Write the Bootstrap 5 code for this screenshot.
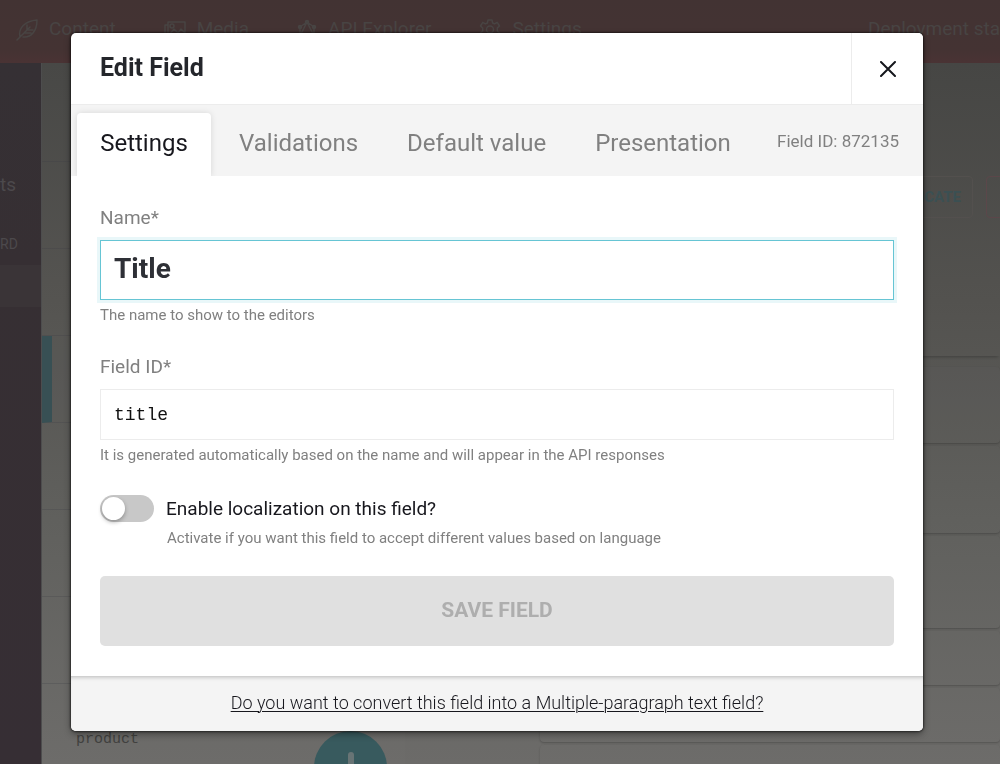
<!DOCTYPE html>
<html lang="en">
<head>
<meta charset="utf-8">
<meta name="viewport" content="width=device-width, initial-scale=1">
<title>Edit Field</title>
<link href="https://cdn.jsdelivr.net/npm/bootstrap@5.3.0/dist/css/bootstrap.min.css" rel="stylesheet">
<style>
  body { font-family: Roboto, "Liberation Sans", sans-serif; color: #17171d; overflow: hidden; }

  /* Dimmed application behind the dialog */
  .app { height: 100vh; overflow: hidden; background: linear-gradient(#464644 64px, #53524f 300px, #5f5f5c 520px, #6c6b69); }
  .app-nav { height: 63px; padding: 0 0 4px 16px; background: linear-gradient(#423333, #443333 50px, #4a3334); color: #484443; font-size: 19px; white-space: nowrap; }
  .app-nav a { color: inherit; gap: 11px; }
  .app-nav svg { fill: none; stroke: currentColor; stroke-width: 1.5; stroke-linejoin: round; stroke-linecap: round; }
  .side { width: 41px; flex: none; background: linear-gradient(#353034, #362f33 200px, #362e34); color: #4c494c; padding-top: 101px; }
  .side-item { height: 42px; line-height: 42px; font-size: 19px; }
  .side-heading { height: 42px; margin-top: 17px; line-height: 42px; font-size: 14px; }
  .side-active { height: 42px; background: #3a3437; }
  .models { width: 364px; flex: none; border-left: 1px solid #4d4d4e; background: rgba(255,255,255,.01); padding-top: 12px; }
  .model-row { height: 87px; border-bottom: 1px solid rgba(60,60,66,.25); padding-left: 34px; flex: none; }
  .model-current { border-left: 10px solid #385054; }
  .model-key { font: 15px/20px "Liberation Mono", monospace; color: #41413f; padding-top: 46px; }
  .add-model { width: 73px; height: 73px; right: 18px; bottom: -40px; border: 0; border-radius: 50%; background: #385a5e; padding: 20px 0 0; }
  .toolbar { padding-top: 113px; gap: 13px; margin-bottom: 62px; }
  .tool { height: 42px; border: 1px solid #53504e; border-radius: 4px; background: none; color: #3b5053; font-size: 15px; font-weight: 700; padding: 0 11px; flex: none; }
  .tool-danger { border-color: #5b474a; width: 48px; margin-right: -34px; }
  .entry { height: 54px; margin: 0 0 3px 135px; border-radius: 4px; background: rgba(255,255,255,.01); box-shadow: 0 1px 2px rgba(0,0,0,.22); flex: none; }
  .entry-tall { height: 92px; }
  .entry-mid { height: 87px; }
  .entry-first { height: 76px; margin-top: 11px; }
  .entries-head { height: 76px; box-shadow: 0 3px 3px -2px rgba(0,0,0,.25); flex: none; }

  /* Dialog */
  .modal { padding: 33px 6px 33px 0 !important; }
  .edit-dialog { max-width: 852px; margin: 0 auto; }
  .edit-dialog .modal-content { border: 0; border-radius: 5px; overflow: hidden; box-shadow: none; color: inherit; }
  .edit-frame { border-radius: 5px; box-shadow: 0 0 2px 1px rgba(0,0,0,.5), 0 3px 7px rgba(0,0,0,.4); }
  .edit-head { height: 72px; border-bottom: 1px solid #ececec; padding: 0 0 0 29px; }
  .edit-head h1 { font-size: 25px; line-height: 32px; font-weight: 700; color: #24262b; padding-bottom: 2px; }
  .close-btn { width: 72px; height: 71px; border: 0; border-left: 1px solid #ececec; background: #fff; }
  .tab-strip { background: #f4f4f4; padding: 7px 24px 0 6px; height: 71px; overflow: hidden; }
  .tab-strip .nav-link { border: 0; border-radius: 4px 4px 0 0; padding: 0 0 4px; height: 64px; font-size: 24px; color: #808080; margin-right: 49px; }
  .tab-strip .nav-link.active { width: 134px; margin-right: 28px; background: #fff; color: #17171d; box-shadow: 0 0 6px rgba(0,0,0,.12); }
  .field-ref { font-size: 17px; line-height: 24px; color: #808080; padding-bottom: 7px; white-space: nowrap; }
  .edit-body { padding: 28px 29px 30px; }
  .field-label { display: block; font-size: 19px; line-height: 28px; color: #808080; margin-bottom: 8px; }
  .field-box { border: 1px solid #ececec; border-radius: 0; padding: 0 13px; }
  .field-name { height: 60px; font-size: 28px; font-weight: 700; color: #2e3036; border-color: #66c5d4; box-shadow: 0 0 0 3px #e9f7f9; padding-bottom: 3px; }
  .field-name:focus { border-color: #66c5d4; box-shadow: 0 0 0 3px #e9f7f9; color: #2e3036; }
  .field-key { height: 51px; font: 18px "Liberation Mono", monospace; color: #111; }
  .hint { font-size: 15px; line-height: 20px; color: #808080; margin: 5px 0 0; }
  .field-group { margin-bottom: 28px; }
  .toggle { appearance: none; flex: none; width: 54px; height: 27px; margin: 0; padding: 2px; border-radius: 14px; background: #c8c8c8; }
  .toggle::before { content: ""; display: block; width: 23px; height: 23px; border-radius: 50%; background: #fff; box-shadow: 0 2px 4px rgba(0,0,0,.3); }
  .toggle:checked { background: #66c5d4; }
  .toggle:checked::before { margin-left: auto; }
  .toggle-row { padding-top: 2px; }
  .toggle-label { font-size: 19px; line-height: 27px; padding-left: 12px; }
  .toggle-hint { padding-left: 67px; margin: 6px 0 28px; }
  .save-btn, .save-btn:disabled { height: 70px; border: 0; border-radius: 5px; background: #e0e0e0; color: #aeaeae; font-size: 21px; font-weight: 700; opacity: 1; }
  .edit-foot { height: 55px; background: #f4f4f4; font-size: 18px; font-weight: 300; box-shadow: inset 0 4px 4px -3px rgba(0,0,0,.25); padding-bottom: 3px; }
  .edit-foot a { color: #17171d; text-decoration-thickness: 1px; text-underline-offset: 2px; }
</style>
</head>
<body>
<div class="app d-flex flex-column" aria-hidden="true">
  <nav class="app-nav d-flex align-items-center flex-shrink-0">
    <a href="#" class="d-flex align-items-center text-decoration-none me-5" tabindex="-1">
      <svg width="22" height="22" viewBox="0 0 22 22"><path d="M1 21 14 8M4 18C2 9 9 2 21 1c0 11-6 18-14 17M8 14h7M11 11V6M11 11h6"/></svg>Content</a>
    <a href="#" class="d-flex align-items-center text-decoration-none me-5" tabindex="-1">
      <svg width="22" height="22" viewBox="0 0 22 22"><path d="M4 3h17v14H4zM4 6H1v14h16v-3M6 15l4-5 4 4 3-4 4 4"/><circle cx="8" cy="7" r="2"/></svg>Media</a>
    <a href="#" class="d-flex align-items-center text-decoration-none me-5" tabindex="-1">
      <svg width="20" height="22" viewBox="0 0 20 22"><path d="m10 3 7 5v9l-7 4-7-4V8zM10 3 3 17h14z"/><g fill="currentColor"><circle cx="10" cy="3" r="1.5"/><circle cx="17" cy="8" r="1.5"/><circle cx="3" cy="8" r="1.5"/></g></svg>API Explorer</a>
    <a href="#" class="d-flex align-items-center text-decoration-none" tabindex="-1">
      <svg width="22" height="22" viewBox="0 0 22 22"><path d="m9 1-.6 3-2 .9L3.800 3.300 1.500 7l2.200 2v3L1.500 14l2.300 3.700 2.600-1.600 2 .9.600 3h4l.6-3 2-.9 2.600 1.600L20.500 14l-2.200-2V9l2.200-2-2.300-3.700-2.600 1.600-2-.9L13 1z"/><circle cx="11" cy="10.500" r="3.500"/></svg>Settings</a>
    <a href="#" class="ms-auto text-decoration-none" tabindex="-1">Deployment sta</a>
  </nav>
  <div class="d-flex flex-grow-1 overflow-hidden">
    <div class="side">
      <div class="side-item">ts</div>
      <div class="side-heading">RD</div>
      <div class="side-active"></div>
    </div>
    <div class="models position-relative overflow-hidden d-flex flex-column">
      <div class="model-row"></div>
      <div class="model-row"></div>
      <div class="model-row"></div>
      <div class="model-row model-current"></div>
      <div class="model-row"></div>
      <div class="model-row"></div>
      <div class="model-row"></div>
      <div class="model-row model-key">product</div>
      <button type="button" class="add-model position-absolute d-flex align-items-start justify-content-center" tabindex="-1" aria-label="Add model"><svg width="32" height="32" viewBox="0 0 32 32"><path d="M16 4v26M3 17h26" stroke="#687475" stroke-width="6" stroke-linecap="round"/></svg></button>
    </div>
    <div class="flex-grow-1 d-flex flex-column overflow-hidden">
      <div class="toolbar d-flex justify-content-end pe-0">
        <button type="button" class="tool" tabindex="-1">DUPLICATE</button>
        <button type="button" class="tool tool-danger" tabindex="-1" aria-label="Delete"></button>
      </div>
      <div class="entries-head"></div>
      <div class="entry entry-first"></div>
      <div class="entry entry-mid"></div>
      <div class="entry entry-tall"></div>
      <div class="entry"></div>
      <div class="entry"></div>
      <div class="entry"></div>
    </div>
  </div>
</div>

<div class="modal show d-block" role="dialog" aria-modal="true" aria-labelledby="dialogTitle">
  <div class="modal-dialog edit-dialog edit-frame">
    <div class="modal-content">
      <div class="edit-head d-flex align-items-center justify-content-between">
        <h1 class="m-0" id="dialogTitle">Edit Field</h1>
        <button type="button" class="close-btn d-flex align-items-center justify-content-center" aria-label="Close">
          <svg width="16" height="16" viewBox="0 0 16 16"><path d="m1 1 14 14M15 1 1 15" stroke="#15171c" stroke-width="2" stroke-linecap="round"/></svg>
        </button>
      </div>
      <div class="tab-strip d-flex align-items-center">
        <div class="nav nav-tabs border-0 flex-nowrap" role="tablist">
          <button type="button" class="nav-link active" role="tab" aria-selected="true">Settings</button>
          <button type="button" class="nav-link" role="tab">Validations</button>
          <button type="button" class="nav-link" role="tab">Default value</button>
          <button type="button" class="nav-link me-0" role="tab">Presentation</button>
        </div>
        <span class="field-ref ms-auto">Field ID: 872135</span>
      </div>
      <form class="edit-body">
        <div class="field-group">
          <label class="field-label" for="fieldName">Name*</label>
          <input class="form-control field-box field-name" id="fieldName" type="text" value="Title">
          <p class="hint">The name to show to the editors</p>
        </div>
        <div class="field-group">
          <label class="field-label" for="fieldKey">Field ID*</label>
          <input class="form-control field-box field-key" id="fieldKey" type="text" value="title">
          <p class="hint">It is generated automatically based on the name and will appear in the API responses</p>
        </div>
        <div class="toggle-row d-flex align-items-center">
          <input class="toggle" type="checkbox" role="switch" id="localize">
          <label class="toggle-label" for="localize">Enable localization on this field?</label>
        </div>
        <p class="hint toggle-hint">Activate if you want this field to accept different values based on language</p>
        <button type="submit" class="btn save-btn w-100" disabled>SAVE FIELD</button>
      </form>
      <div class="edit-foot d-flex align-items-center justify-content-center">
        <a href="#">Do you want to convert this field into a Multiple-paragraph text field?</a>
      </div>
    </div>
  </div>
</div>
<script src="https://cdn.jsdelivr.net/npm/bootstrap@5.3.0/dist/js/bootstrap.bundle.min.js"></script>
</body>
</html>
